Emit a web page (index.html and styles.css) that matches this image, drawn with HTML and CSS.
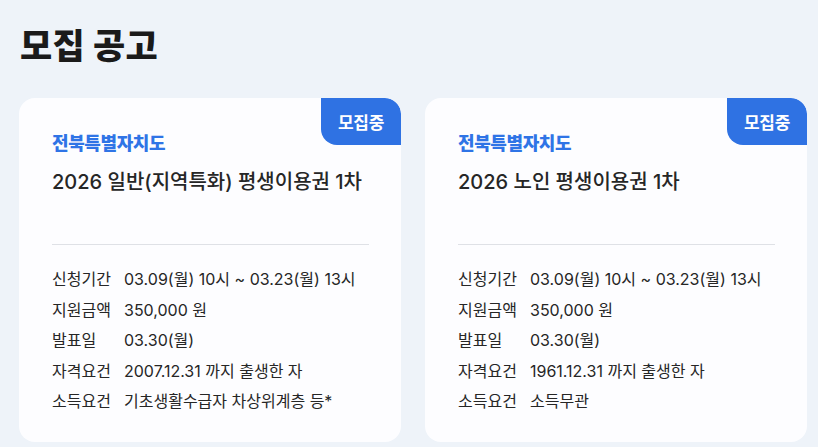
FILE: index.html
```html
<!DOCTYPE html>
<html lang="ko">
<head>
<meta charset="utf-8">
<link rel="stylesheet" href="styles.css">
</head>
<body>
<main class="page">
  <h1 class="page-title">모집 공고</h1>
  <div class="cards">
    <article class="card">
      <span class="badge">모집중</span>
      <p class="region">전북특별자치도</p>
      <h2 class="card-title">2026 일반(지역특화) 평생이용권 1차</h2>
      <hr class="divider">
      <dl class="info">
        <div class="row"><dt>신청기간</dt><dd>03.09(월) 10시 ~ 03.23(월) 13시</dd></div>
        <div class="row"><dt>지원금액</dt><dd>350,000 원</dd></div>
        <div class="row"><dt>발표일</dt><dd>03.30(월)</dd></div>
        <div class="row"><dt>자격요건</dt><dd>2007.12.31 까지 출생한 자</dd></div>
        <div class="row"><dt>소득요건</dt><dd>기초생활수급자 차상위계층 등*</dd></div>
      </dl>
    </article>
    <article class="card">
      <span class="badge">모집중</span>
      <p class="region">전북특별자치도</p>
      <h2 class="card-title">2026 노인 평생이용권 1차</h2>
      <hr class="divider">
      <dl class="info">
        <div class="row"><dt>신청기간</dt><dd>03.09(월) 10시 ~ 03.23(월) 13시</dd></div>
        <div class="row"><dt>지원금액</dt><dd>350,000 원</dd></div>
        <div class="row"><dt>발표일</dt><dd>03.30(월)</dd></div>
        <div class="row"><dt>자격요건</dt><dd>1961.12.31 까지 출생한 자</dd></div>
        <div class="row"><dt>소득요건</dt><dd>소득무관</dd></div>
      </dl>
    </article>
  </div>
</main>
</body>
</html>
```
FILE: styles.css
```css
* { box-sizing: border-box; }
html, body {
  margin: 0;
  padding: 0;
  background: #eef3f9;
  font-family: "Inter", "Noto Sans CJK KR", "Noto Sans", sans-serif;
  color: #2a2a2a;
}
.page {
  padding: 24px 11px 0 19px;
}
.page-title {
  margin: 0 0 30px 1px;
  font-size: 35px;
  line-height: 44px;
  font-weight: 800;
  color: #1a1a1a;
  letter-spacing: 0.3px;
}
.cards {
  display: grid;
  grid-template-columns: 382px 382px;
  gap: 24px;
}
.card {
  position: relative;
  background: #fdfdff;
  border-radius: 16px;
  padding: 33px 32px 26px 33px;
  height: 344px;
  overflow: hidden;
}
.badge {
  position: absolute;
  top: 0;
  right: 0;
  width: 80px;
  height: 47px;
  background: #2f72e3;
  color: #fff;
  font-weight: 700;
  font-size: 17px;
  display: flex;
  align-items: center;
  justify-content: center;
  border-radius: 0 16px 0 16px;
  letter-spacing: -0.3px;
}
.region {
  margin: 0;
  font-size: 18px;
  line-height: 26px;
  font-weight: 800;
  color: #2f74e6;
  letter-spacing: -0.4px;
}
.card-title {
  margin: 11px 0 0;
  font-size: 20px;
  line-height: 28px;
  font-weight: 500;
  color: #262626;
  min-height: 76px;
  letter-spacing: 0;
}
.divider {
  margin: 0;
  border: 0;
  border-top: 1px solid #dfe1e6;
}
.info {
  margin: 19px 0 0;
}
.row {
  display: flex;
  font-size: 16px;
  line-height: 30.5px;
  color: #262626;
}
.row dt {
  width: 72px;
  flex: none;
}
.row dd {
  margin: 0;
}
```
